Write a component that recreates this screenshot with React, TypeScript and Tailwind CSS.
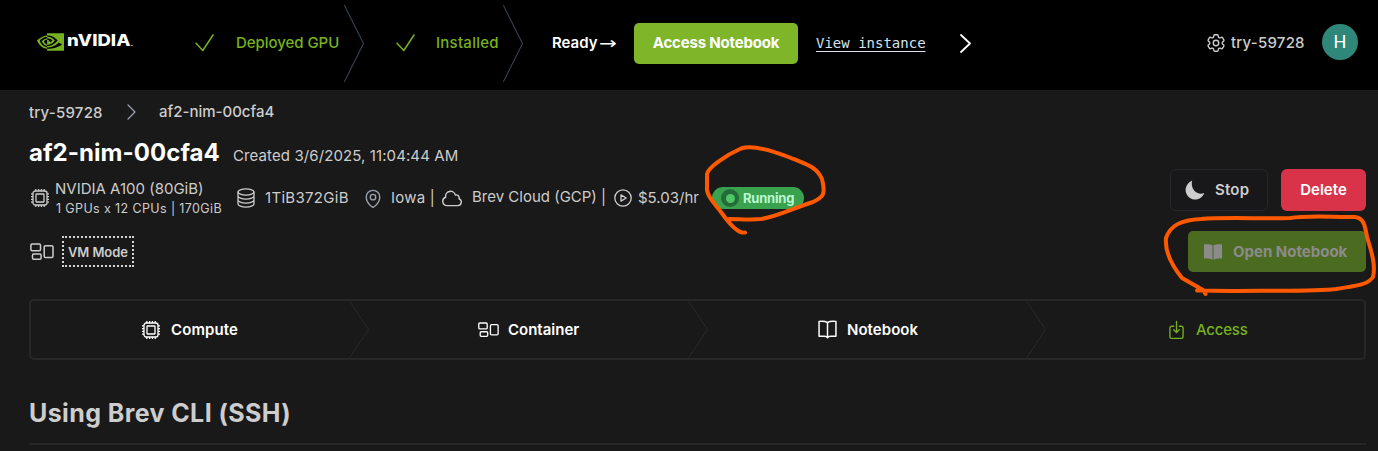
import type { ReactNode } from "react";

type IconProps = { className?: string };

function Svg({ box, className, width = 1.5, children }: { box: string; className?: string; width?: number; children: ReactNode }) {
  return (
    <svg viewBox={box} fill="none" stroke="currentColor" strokeWidth={width} strokeLinecap="round" strokeLinejoin="round" className={`shrink-0 ${className ?? ""}`}>
      {children}
    </svg>
  );
}

function NvidiaEye({ className }: IconProps) {
  return (
    <svg viewBox="0 3.9 24 16.2" preserveAspectRatio="none" className={`shrink-0 ${className ?? ""}`}>
      <path
        fill="#76b21f"
        d="M8.948 8.798v-1.43a6.7 6.7 0 0 1 .424-.018c3.922-.124 6.493 3.374 6.493 3.374s-2.774 3.851-5.75 3.851c-.398 0-.787-.062-1.158-.185v-4.346c1.528.185 1.837.857 2.747 2.385l2.04-1.714s-1.492-1.952-4-1.952a6.016 6.016 0 0 0-.796.035m0-4.735v2.138l.424-.027c5.45-.185 9.01 4.47 9.01 4.47s-4.08 4.964-8.33 4.964c-.37 0-.733-.035-1.095-.097v1.325c.3.035.61.062.91.062 3.957 0 6.82-2.023 9.593-4.408.459.371 2.34 1.263 2.73 1.652-2.633 2.208-8.772 3.984-12.253 3.984-.335 0-.653-.018-.971-.053v1.864H24V4.063zm0 10.326v1.131c-3.657-.654-4.673-4.46-4.673-4.46s1.758-1.944 4.673-2.262v1.237H8.94c-1.528-.186-2.73 1.245-2.73 1.245s.68 2.412 2.739 3.11M2.456 10.9s2.164-3.197 6.5-3.533V6.201C4.153 6.59 0 10.653 0 10.653s2.35 6.802 8.948 7.42v-1.237c-4.84-.6-6.492-5.936-6.492-5.936z"
      />
    </svg>
  );
}

function NvidiaWord({ className }: IconProps) {
  return (
    <span className={className}>
      nVIDIA<span className="text-[8px] font-normal">.</span>
    </span>
  );
}

function Chip({ className }: IconProps) {
  return (
    <Svg box="0 0 18 18" className={className} width={1.3}>
      <rect x="2" y="2" width="14" height="14" rx="2.2" />
      <rect x="5" y="5" width="8" height="8" rx="0.5" />
      <path strokeLinecap="butt" d="M4.8 0v2M7.6 0v2M10.4 0v2M13.2 0v2M4.8 16v2M7.6 16v2M10.4 16v2M13.2 16v2M0 4.8h2M0 7.6h2M0 10.4h2M0 13.2h2M16 4.8h2M16 7.6h2M16 10.4h2M16 13.2h2" />
    </Svg>
  );
}

function Group({ className }: IconProps) {
  return (
    <Svg box="0 0 24 18" className={className} width={1.5}>
      <rect x="0.9" y="1" width="9.6" height="6.8" rx="1.2" />
      <rect x="2.5" y="11" width="8.6" height="5.3" rx="1.2" />
      <rect x="14.2" y="2.8" width="8.8" height="11.8" rx="1.3" />
    </Svg>
  );
}

function Gear({ className }: IconProps) {
  return (
    <Svg box="2.2 2.2 19.6 19.6" className={className} width={1.5}>
      <path d="M9.6 3.9c.1-.5.6-.9 1.1-.9h2.6c.5 0 1 .4 1.1.9l.2 1.3c.1.4.3.7.6.9l.3.2c.3.2.7.2 1.1.1l1.2-.5c.5-.2 1.1 0 1.4.5l1.3 2.2c.3.5.2 1.1-.3 1.4l-1 .8c-.3.3-.4.6-.4 1v.4c0 .4.1.7.4 1l1 .8c.4.4.5 1 .3 1.4l-1.3 2.2c-.3.5-.9.7-1.4.5l-1.2-.5c-.4-.1-.8-.1-1.1.1l-.3.2c-.3.2-.5.5-.6.9l-.2 1.3c-.1.5-.6.9-1.1.9h-2.6c-.5 0-1-.4-1.1-.9l-.2-1.3c-.1-.4-.3-.7-.6-.9l-.3-.2c-.3-.2-.7-.2-1.1-.1l-1.2.5c-.5.2-1.1 0-1.4-.5l-1.3-2.2c-.3-.5-.2-1.1.3-1.4l1-.8c.3-.3.4-.6.4-1v-.4c0-.4-.1-.7-.4-1l-1-.8c-.4-.4-.5-1-.3-1.4l1.3-2.2c.3-.5.9-.7 1.4-.5l1.2.5c.4.1.8.1 1.1-.1l.3-.2c.3-.2.5-.5.6-.9z" />
      <circle cx="12" cy="12" r="3" />
    </Svg>
  );
}

function Disks({ className }: IconProps) {
  return (
    <Svg box="0 0 18 20" className={className} width={1.3}>
      <ellipse cx="9" cy="4" rx="8" ry="3.1" />
      <path d="M1 4v12c0 1.700 3.600 3.100 8 3.100s8-1.400 8-3.100V4M1 8c0 1.700 3.600 3.100 8 3.100S17 9.700 17 8M1 12c0 1.700 3.600 3.100 8 3.100s8-1.400 8-3.100" />
    </Svg>
  );
}

function Pin({ className }: IconProps) {
  return (
    <Svg box="3.5 1.5 17 21" className={className}>
      <path d="M15 10.500a3 3 0 1 1-6 0 3 3 0 0 1 6 0Z" />
      <path d="M19.500 10.500c0 7.142-7.500 11.250-7.500 11.250S4.500 17.642 4.500 10.500a7.500 7.500 0 1 1 15 0Z" />
    </Svg>
  );
}

function Cloud({ className }: IconProps) {
  return (
    <Svg box="1.5 3.5 21 17" className={className}>
      <path d="M2.250 15a4.500 4.500 0 0 0 4.500 4.500H18a3.750 3.750 0 0 0 1.332-7.257 3 3 0 0 0-3.758-3.848 5.250 5.250 0 0 0-10.233 2.330A4.502 4.502 0 0 0 2.250 15Z" />
    </Svg>
  );
}

function Play({ className }: IconProps) {
  return (
    <Svg box="0 0 18 18" className={className} width={1.3}>
      <circle cx="9" cy="9" r="8.2" />
      <path d="M7 5.900v6.200L12.200 9z" />
    </Svg>
  );
}

function Book({ className }: IconProps) {
  return (
    <Svg box="0 0 18 18" className={className} width={1.4}>
      <path d="M9 2.400C7.500 1.300 4.500.9 1 1.300v14.200h5.300c1.200 0 2 .4 2.700 1.300.7-.9 1.500-1.300 2.700-1.300H17V1.300C13.500.9 10.500 1.300 9 2.400zM9 2.400v14.200" />
    </Svg>
  );
}

function Download({ className }: IconProps) {
  return (
    <Svg box="0 0 16 20" className={className} width={1.4}>
      <path d="M5 6H3a2 2 0 0 0-2 2v9a2 2 0 0 0 2 2h10a2 2 0 0 0 2-2V8a2 2 0 0 0-2-2h-2M8 .7v11.800M5 9.700l3 3 3-3" />
    </Svg>
  );
}

function Check() {
  return (
    <Svg box="0 0 19 18" className="h-[18px] w-[19px]" width={1.5}>
      <path d="M1 9.300l6.800 7.200L18 1" />
    </Svg>
  );
}

function Step({ icon, label, className }: { icon: ReactNode; label: string; className: string }) {
  return (
    <div className={`flex h-full shrink-0 items-center leading-5 ${className}`}>
      {icon}
      <span>{label}</span>
    </div>
  );
}

function Divider() {
  return (
    <Svg box="0 0 20 57" className="-ml-5 h-[57px] w-5 text-[#292929]" width={1}>
      <path d="M.5 0l19 28.500L.5 57" />
    </Svg>
  );
}

function HeaderDivider() {
  return (
    <Svg box="0 0 20 77" className="h-[77px] w-5 text-[#374151]" width={1.1}>
      <path d="M.5.5l19 38-19 38" />
    </Svg>
  );
}

export default function App() {
  return (
    <div className="relative h-[451px] w-[1378px] overflow-hidden bg-[#191919] font-['Inter',sans-serif] text-[15px] leading-5 whitespace-nowrap text-[#cdcdcd]">
      <header className="flex h-[90px] items-center bg-black pb-[4px] pl-[37px]">
        <div className="flex w-[158px] items-center pb-[3px]">
          <NvidiaEye className="h-[18px] w-[27px]" />
          <NvidiaWord className="ml-[3px] origin-left scale-x-[1.16] text-[16px] font-extrabold text-white" />
        </div>
        <div className="flex h-full w-[149px] items-center text-[#76b21f]">
          <Check />
          <span className="ml-[22px] font-medium tracking-[-0.05px]">Deployed GPU</span>
        </div>
        <HeaderDivider />
        <div className="ml-[32px] flex w-[107px] items-center text-[#76b21f]">
          <Check />
          <span className="ml-[21px] font-medium tracking-[0.25px]">Installed</span>
        </div>
        <HeaderDivider />
        <span className="ml-[29px] flex w-[82px] items-center font-semibold text-white">
          Ready
          <span className="ml-[1px] inline-block origin-left scale-x-[1.25] font-['DejaVu_Sans',sans-serif] text-[17px] font-normal">→</span>
        </span>
        <button className="h-[41px] w-[164px] rounded-[5px] bg-[#7fb529] text-[15px] font-bold tracking-[-0.18px] text-white">Access Notebook</button>
        <a className="ml-[18px] w-[110px] font-['DejaVu_Sans_Mono',monospace] text-[14px] text-[#d5e4ee] underline underline-offset-[3px]">View instance</a>
        <Svg box="0 0 11 19" className="ml-[34px] h-[19px] w-[11px] text-white" width={1.8}>
          <path d="M1 1l9 8.500L1 18" />
        </Svg>
        <div className="ml-auto flex items-center pr-[20px]">
          <Gear className="size-[18px]" />
          <span className="ml-[6px] w-[76px] font-medium tracking-[0.22px]">try-59728</span>
          <span className="mb-[3px] ml-[15px] flex size-9 items-center justify-center rounded-full bg-[#2f877a] font-['Roboto',sans-serif] text-[18px] text-white">H</span>
        </div>
      </header>

      <main className="pl-[29px]">
        <nav className="flex h-[45px] items-center font-medium">
          <span className="w-[98px] tracking-[0.22px]">try-59728</span>
          <Svg box="0 0 9 16" className="-mt-px h-4 w-[9px] text-[#9ca3af]" width={1.2}>
            <path d="M1 1l7 7-7 7" />
          </Svg>
          <span className="-mt-[2px] ml-[23px]">af2-nim-00cfa4</span>
        </nav>
        <div className="flex h-[34px] items-baseline">
          <h1 className="w-[204px] text-[24px] leading-9 font-bold tracking-[0.05px] text-white">af2-nim-00cfa4</h1>
          <span className="tracking-[0.1px]">Created 3/6/2025, 11:04:44 AM</span>
        </div>

        <div className="flex h-[130px]">
          <div className="flex h-[58px] w-[675px] items-center">
            <Chip className="ml-[2px] size-[18px]" />
            <div className="ml-[6px] w-[182px] pt-px">
              <div className="text-[15px] leading-5">NVIDIA A100 (80GiB)</div>
              <div className="pl-px text-[12.5px] leading-[20px] tracking-[0.38px]">1 GPUs x 12 CPUs | 170GiB</div>
            </div>
            <Disks className="h-5 w-[18px]" />
            <span className="ml-[10px] w-[100px] tracking-[0.3px]">1TiB372GiB</span>
            <Pin className="h-[19px] w-4 text-[#9ca3af]" />
            <span className="ml-[10px] w-[51px] tracking-[0.2px]">Iowa |</span>
            <Cloud className="h-[17px] w-5" />
            <span className="ml-[10px] w-[142px] pb-[2px]">Brev Cloud (GCP) |</span>
            <Play className="size-[18px]" />
            <span className="ml-[6px]">$5.03/hr</span>
          </div>
          <div className="mt-[18px] ml-[8px] flex h-[22px] w-[92px] items-center rounded-full bg-[#3aa24f] pl-[9px] text-[13px] font-bold tracking-[-0.2px] text-[#bbf7d0]">
            <span className="mr-[4px] flex size-[18px] items-center justify-center rounded-full bg-[#256b3a]">
              <span className="size-[9px] rounded-full bg-[#4cc965]" />
            </span>
            Running
          </div>
          <div className="mr-[12px] ml-auto flex flex-col items-end gap-5">
            <div className="flex gap-[13px]">
              <button className="flex h-[42px] w-[98px] items-center rounded-[6px] border border-[#27272a] bg-[#18181b] pl-[14px] font-semibold tracking-[0.2px]">
                <svg viewBox="0 0 20 20" className="mr-[10px] size-[20px]" fill="currentColor">
                  <path d="M7.200.8A9.600 9.600 0 1 0 19.300 13C12 16 5 9 7.200.8Z" />
                </svg>
                Stop
              </button>
              <button className="h-[42px] w-[85px] rounded-[6px] bg-[#d83349] font-semibold text-white">Delete</button>
            </div>
            <button className="flex h-[41px] w-[178px] items-center rounded-[5px] bg-[#4b6b20] pl-[16px] font-bold text-[#8b8b8b]">
              <svg viewBox="0 0 18 16" className="mr-[11px] h-4 w-[18px]" fill="currentColor">
                <path d="M8.500 1.300C6.500.2 3.500 0 .5.300Q0 .4 0 .9v13q0 .7.600.6c3-.2 5.800 0 7.900 1.200zM9.500 1.300c2-1.100 5-1.300 8-1q.5.1.5.600v13q0 .7-.6.600c-3-.2-5.800 0-7.900 1.200z" />
              </svg>
              Open Notebook
            </button>
          </div>
        </div>

        <div className="-mt-[63px] flex h-[31px] items-center pl-px">
          <Group className="h-[18px] w-6" />
          <span className="ml-[8px] flex h-[31px] w-[72px] items-center border-2 border-dotted border-[#d4d4d4] pl-[4px] text-[13px] font-semibold tracking-[-0.1px]">VM Mode</span>
        </div>

        <div className="mt-[32px] flex h-[61px] w-[1337px] items-center rounded-[5px] border-2 border-[#272727]">
          <Step icon={<Chip className="mr-[11px] size-[18px]" />} label="Compute" className="w-[338px] pl-[111px] font-semibold tracking-[0.1px] text-white" />
          <Divider />
          <Step icon={<Group className="mr-[9px] h-[16px] w-[21px]" />} label="Container" className="w-[339px] pl-[109px] font-semibold text-white" />
          <Divider />
          <Step icon={<Book className="mr-[10px] size-[19px]" />} label="Notebook" className="w-[338px] pl-[110px] font-semibold tracking-[0.05px] text-white" />
          <Divider />
          <Step icon={<Download className="mr-[12px] h-[20px] w-[15px]" />} label="Access" className="w-[318px] pl-[123px] font-medium tracking-[-0.2px] text-[#76b21f]" />
        </div>

        <h2 className="mt-[35px] h-[50px] w-[1337px] border-b-2 border-[#272727] text-[25px] leading-9 font-bold tracking-[0.4px]">Using Brev CLI (SSH)</h2>
      </main>

      <svg className="pointer-events-none absolute inset-0 h-[451px] w-[1378px]" fill="none" stroke="#ff5900" strokeWidth="4" strokeLinecap="round" strokeLinejoin="round">
        <path d="M745 232.500C738 234 728 222 721 212C712 201 706 194 707 187V174C708 168 724 156 741 148.500C754 144 776 152 791 158C811 166 817 168 822 179C826 195 823 197 813 202C796 207 777 217 761 219C750 220 740 219 729 219" />
        <path d="M1205.500 294L1203 290L1182 278C1169 262 1165 249 1166 238C1170 226 1180 220 1201 219C1224 217 1265 219 1290 218C1308 215 1330 217 1355 217C1364 218 1365 226 1367 237C1371 250 1376 265 1373 277C1367 286 1352 286 1336 289C1310 292 1265 290 1230 291L1197 290.500" />
      </svg>
    </div>
  );
}
